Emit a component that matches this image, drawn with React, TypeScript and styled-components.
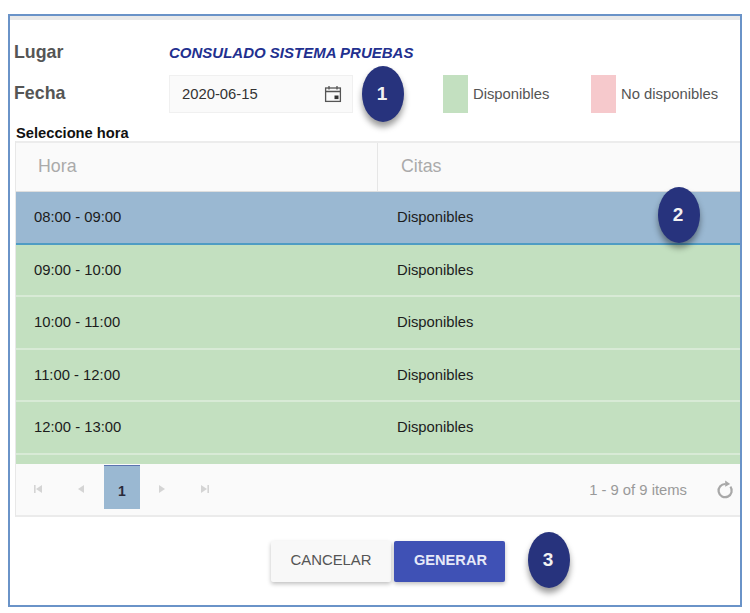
import React, { FC, ReactElement } from 'react';
import styled, { createGlobalStyle } from 'styled-components';

interface BadgeProps {
  $left: number;
  $top: number;
};

interface RowProps {
  $selected?: boolean;
};

interface SwatchProps {
  $color: string;
};

const hours = ['08:00 - 09:00', '09:00 - 10:00', '10:00 - 11:00', '11:00 - 12:00', '12:00 - 13:00'];

const GlobalStyle = createGlobalStyle`
  html, body {
    margin: 0;
    padding: 0;
    background: #fff;
    font-family: "Liberation Sans", Arial, sans-serif;
  }
`;

const Frame = styled.div`
  position: relative;
  box-sizing: border-box;
  width: 734px;
  height: 593px;
  margin: 14px 0 0 8px;
  border: 2px solid #6a93c8;
  background: #fff;
  display: flex;
  flex-direction: column;
`;

const TopStrip = styled.div`
  height: 4px;
  background: #e9e9e9;
`;

const PlaceRow = styled.div`
  display: flex;
  align-items: center;
  height: 34px;
  margin-top: 16px;
  padding-left: 4px;
`;

const DateRow = styled.div`
  display: flex;
  align-items: center;
  height: 38px;
  margin-top: 5px;
  padding-left: 4px;
`;

const Label = styled.div`
  width: 155px;
  margin-top: -1px;
  font-size: 17.8px;
  font-weight: 700;
  color: #555;
`;

const PlaceValue = styled.div`
  font-size: 15px;
  font-weight: 700;
  font-style: italic;
  color: #22308f;
  margin-top: -1px;
`;

const DateInput = styled.div`
  box-sizing: border-box;
  width: 184px;
  height: 38px;
  display: flex;
  align-items: center;
  justify-content: space-between;
  padding: 0 10px 0 12px;
  background: #fafafa;
  border: 1px solid #f0f0f0;
  font-size: 14.8px;
  color: #333;
`;

const Legend = styled.div`
  display: flex;
  align-items: center;
  margin-left: 90px;
`;

const LegendItem = styled.div`
  display: flex;
  align-items: center;
  gap: 5px;
  width: 148px;
  font-size: 14.8px;
  color: #555;
`;

const Swatch = styled.div<SwatchProps>`
  width: 25px;
  height: 38px;
  background: ${({ $color }) => $color};
`;

const Caption = styled.div`
  height: 20px;
  line-height: 25px;
  margin: 8px 0 0 6px;
  font-size: 14.7px;
  font-weight: 700;
  color: #111;
`;

const Grid = styled.div`
  margin-left: 5px;
  border-left: 1px solid #e8e8e8;
  border-bottom: 2px solid #ebebeb;
`;

const HeaderRow = styled.div`
  display: grid;
  grid-template-columns: 361px 1fr;
  height: 51px;
  box-sizing: border-box;
  background: #fafafa;
  border-top: 2px solid #ececec;
  border-bottom: 1px solid #dedede;
`;

const HeaderCell = styled.div`
  display: flex;
  align-items: center;
  padding: 0 0 2px 22px;
  font-size: 17.8px;
  color: #aaa;

  & + & {
    border-left: 1px solid #e6e6e6;
    padding-left: 23px;
  }
`;

const Body = styled.div`
  height: 272px;
  overflow: hidden;
  background: #c3e0c0;
`;

const Row = styled.div<RowProps>`
  display: grid;
  grid-template-columns: 361px 1fr;
  box-sizing: border-box;
  height: 52.5px;
  align-items: center;
  background: ${({ $selected }) => ($selected ? '#9ab8d2' : '#c3e0c0')};
  border-bottom: ${({ $selected }) => ($selected ? '2px solid #4f9cc4' : '2px solid #d8ead6')};
  font-size: 14.8px;
  color: #1c1c1c;
`;

const TimeCell = styled.div`
  padding-left: 18px;
`;

const StatusCell = styled.div`
  padding-left: 20px;
`;

const Pager = styled.div`
  display: flex;
  align-items: flex-start;
  height: 51px;
  background: #fafafa;
`;

const PagerIcon = styled.div`
  width: 43px;
  height: 45px;
  padding-top: 4px;
  box-sizing: border-box;
  display: flex;
  align-items: center;
  justify-content: center;
  color: #d4d4d4;
`;

const PageButton = styled.div`
  box-sizing: border-box;
  width: 36px;
  height: 44px;
  margin: 1px 0 0 2px;
  padding-top: 7px;
  display: flex;
  align-items: center;
  justify-content: center;
  background: #9ab8d2;
  border-top: 1px solid #5b74b0;
  font-size: 14px;
  font-weight: 700;
  color: #2a2a3a;
`;

const PagerInfo = styled.div`
  margin-left: auto;
  height: 51px;
  display: flex;
  align-items: center;
  font-size: 14.8px;
  color: #999;
`;

const RefreshButton = styled.div`
  width: 20px;
  height: 51px;
  margin: 0 5px 0 28px;
  display: flex;
  align-items: center;
  justify-content: center;
  color: #a8a8a8;
`;

const Actions = styled.div`
  display: flex;
  justify-content: center;
  gap: 3px;
  margin-top: 24px;
  padding-left: 26px;
`;

const CancelButton = styled.button`
  width: 120px;
  height: 41px;
  padding: 0 0 3px;
  border: none;
  border-radius: 2px;
  background: #f8f8f8;
  box-shadow: 0 2px 4px rgba(0, 0, 0, 0.25);
  font-family: inherit;
  font-size: 14.9px;
  color: #555;
`;

const SubmitButton = styled(CancelButton)`
  width: 111px;
  padding-left: 2px;
  background: #3f51b5;
  color: #e6e9f8;
  font-size: 14.6px;
  font-weight: 700;
`;

const Badge = styled.div<BadgeProps>`
  position: absolute;
  left: ${({ $left }) => $left}px;
  top: ${({ $top }) => $top}px;
  width: 42px;
  height: 56px;
  padding-right: 2px;
  box-sizing: border-box;
  border-radius: 50%;
  display: flex;
  align-items: center;
  justify-content: center;
  background: #27337d;
  box-shadow: 0 5px 6px rgba(0, 0, 0, 0.4);
  font-size: 19px;
  font-weight: 700;
  color: #f2f2f2;
`;

const CalendarIcon: FC = (): ReactElement =>
  <svg width="18" height="18" viewBox="0 0 18 18" fill="none" stroke="#555" strokeWidth="1.3">
    <rect x="1.6" y="3" width="14.8" height="13.4" />
    <path d="M1.6 6.5h14.8M5 1v3.4M13 1v3.4" />
    <rect x="10.5" y="10.5" width="4" height="3.6" fill="#333" stroke="none" />
  </svg>

const PagerGlyph: FC<{ d: string }> = ({ d }): ReactElement =>
  <svg width="10" height="10" viewBox="0 0 10 10" fill="currentColor">
    <path d={d} />
  </svg>

const RefreshIcon: FC = (): ReactElement =>
  <svg width="20" height="20" viewBox="0 0 20 20" fill="none" stroke="currentColor" strokeWidth="2.2">
    <path d="M10.5 4A6.6 6.6 0 1 0 15.4 6.6" />
    <path d="M10.2 0.6l5 3.4-5 2.8z" fill="currentColor" stroke="none" />
  </svg>

const App: FC = (): ReactElement =>
  <>
    <GlobalStyle />
    <Frame>
      <TopStrip />
      <PlaceRow>
        <Label>Lugar</Label>
        <PlaceValue>CONSULADO SISTEMA PRUEBAS</PlaceValue>
      </PlaceRow>
      <DateRow>
        <Label>Fecha</Label>
        <DateInput>
          2020-06-15
          <CalendarIcon />
        </DateInput>
        <Legend>
          <LegendItem>
            <Swatch $color="#c3e0c0" />
            Disponibles
          </LegendItem>
          <LegendItem>
            <Swatch $color="#f6c9cc" />
            No disponibles
          </LegendItem>
        </Legend>
      </DateRow>
      <Caption>Seleccione hora</Caption>
      <Grid>
        <HeaderRow>
          <HeaderCell>Hora</HeaderCell>
          <HeaderCell>Citas</HeaderCell>
        </HeaderRow>
        <Body>
          {hours.map((hour, index) =>
            <Row key={hour} $selected={index === 0}>
              <TimeCell>{hour}</TimeCell>
              <StatusCell>Disponibles</StatusCell>
            </Row>
          )}
        </Body>
        <Pager>
          <PagerIcon><PagerGlyph d="M1 1h1.6v8H1zM9 1v8L3 5z" /></PagerIcon>
          <PagerIcon><PagerGlyph d="M8 1v8L2 5z" /></PagerIcon>
          <PageButton>1</PageButton>
          <PagerIcon><PagerGlyph d="M2 1v8l6-4z" /></PagerIcon>
          <PagerIcon><PagerGlyph d="M1 1v8l6-4zM7.4 1H9v8H7.4z" /></PagerIcon>
          <PagerInfo>1 - 9 of 9 items</PagerInfo>
          <RefreshButton><RefreshIcon /></RefreshButton>
        </Pager>
      </Grid>
      <Actions>
        <CancelButton>CANCELAR</CancelButton>
        <SubmitButton>GENERAR</SubmitButton>
      </Actions>
      <Badge $left={352} $top={50}>1</Badge>
      <Badge $left={648} $top={171}>2</Badge>
      <Badge $left={518} $top={516}>3</Badge>
    </Frame>
  </>

export default App;
